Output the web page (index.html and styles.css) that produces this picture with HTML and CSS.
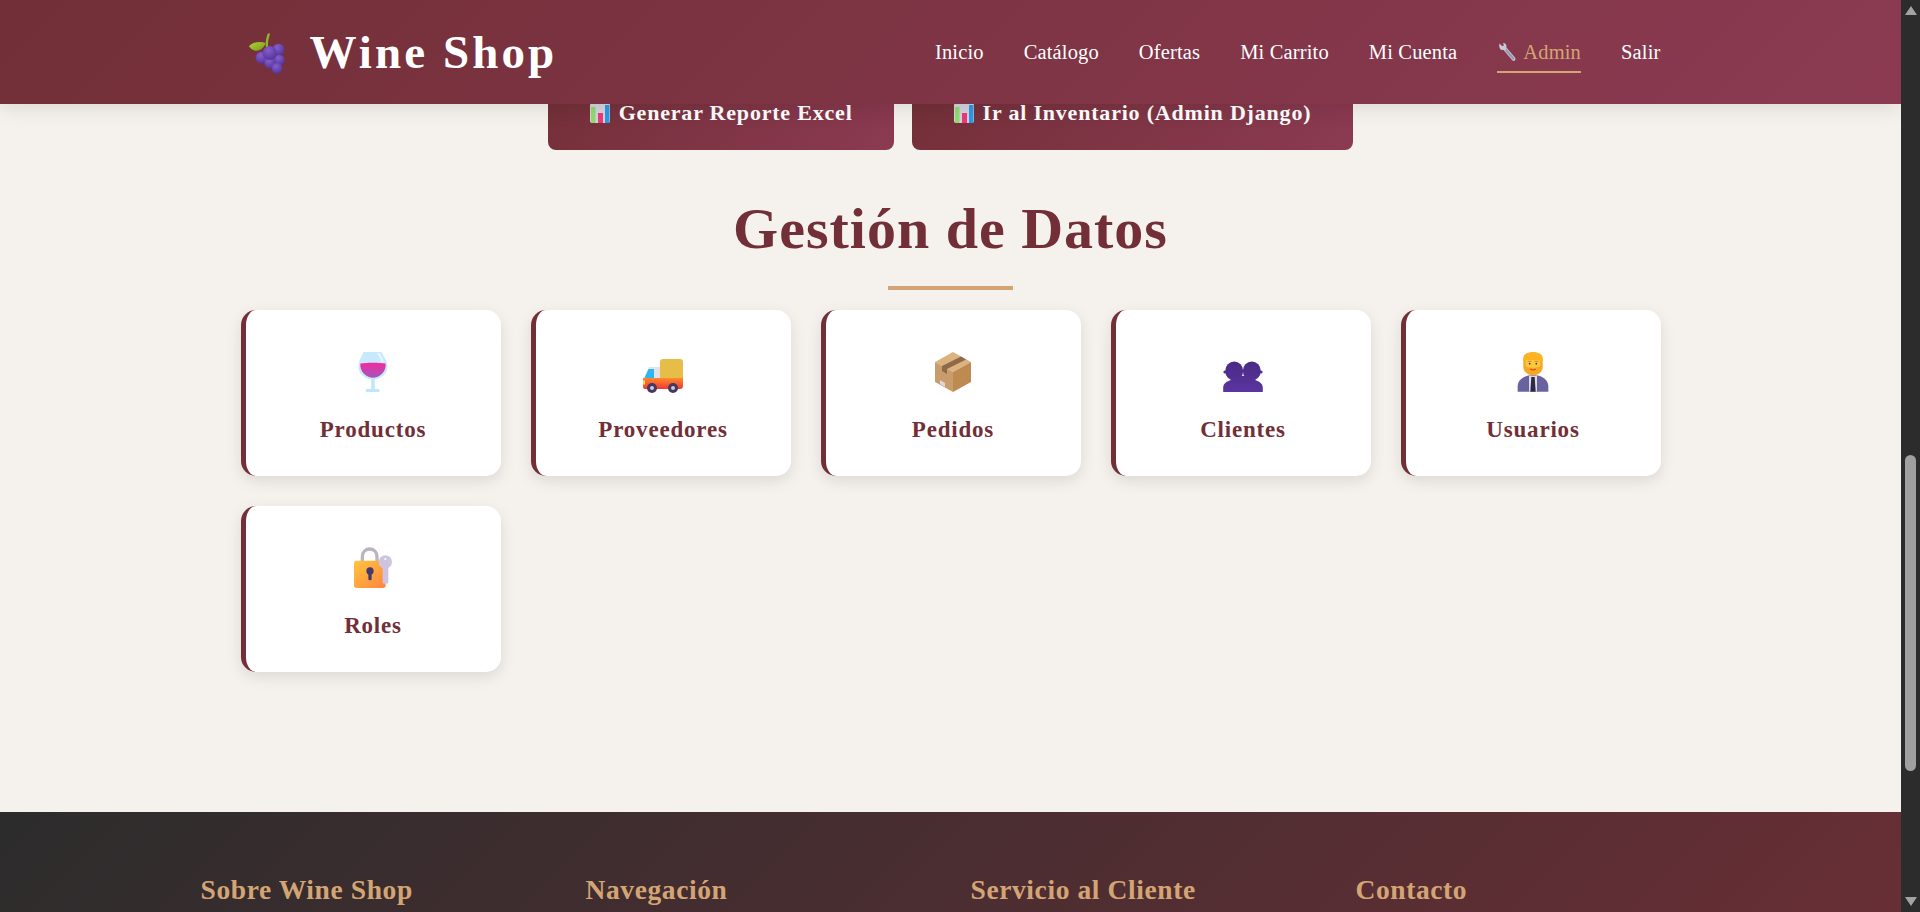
FILE: index.html
```html
<!DOCTYPE html>
<html>
<head>
    <title>Wine Shop</title>
    <link rel="stylesheet" href="styles.css">
</head>
<body>
    <div class="page">
        <header class="site-header">
            <div class="header-inner">
                <a class="logo">
                    <svg class="logo-icon" viewBox="0 0 150 150">
                        <defs>
                            <radialGradient id="grape" cx="40%" cy="30%" r="75%">
                                <stop offset="0" stop-color="#8660cc"/>
                                <stop offset="1" stop-color="#52309a"/>
                            </radialGradient>
                            <linearGradient id="leaf" x1="0" y1="0" x2="1" y2="1">
                                <stop offset="0" stop-color="#b6d43a"/>
                                <stop offset="1" stop-color="#6f9a1c"/>
                            </linearGradient>
                        </defs>
                        <path d="M66 60 C64 48 67 34 71 22" stroke="#8fb52a" stroke-width="7" fill="none" stroke-linecap="round"/>
                        <path d="M12 58 C24 44 46 42 62 48 C58 62 44 73 30 71 C22 69 16 64 12 58Z" fill="url(#leaf)"/>
                        <circle cx="100" cy="68" r="18" fill="url(#grape)"/>
                        <circle cx="50" cy="92" r="18" fill="url(#grape)"/>
                        <circle cx="103" cy="99" r="16" fill="url(#grape)"/>
                        <circle cx="75" cy="108" r="17" fill="url(#grape)"/>
                        <circle cx="96" cy="124" r="16" fill="url(#grape)"/>
                        <circle cx="74" cy="78" r="21" fill="url(#grape)"/>
                    </svg>
                    <span>Wine Shop</span>
                </a>
                <nav class="main-nav">
                    <a>Inicio</a>
                    <a>Catálogo</a>
                    <a>Ofertas</a>
                    <a>Mi Carrito</a>
                    <a>Mi Cuenta</a>
                    <a class="active">
                        <svg class="wrench" viewBox="0 0 20 20">
                            <path d="M2.5 1.5 L5 4 L7 3.6 L6 1 C8.5 1 10 3 9.4 5.6 L18 15.6 C19 17 18.4 18.4 17.4 18.8 C16.4 19.2 15.4 18.6 14.8 17.8 L6.6 8 C4 8.6 1.4 6.4 2.5 1.5Z" fill="#c9c7d6"/>
                            <path d="M9.4 6.6 L17.6 16.4 L16 18 L8 8.4Z" fill="#9a97ad"/>
                        </svg>
                        Admin
                    </a>
                    <a>Salir</a>
                </nav>
            </div>
        </header>

        <main class="content">
            <div class="actions">
                <a class="btn">
                    <svg class="chart" viewBox="0 0 20 20">
                        <rect width="20" height="20" rx="2" fill="#d6d2de"/>
                        <rect x="1" y="4" width="4.5" height="16" fill="#8fdc6e"/>
                        <rect x="8" y="10" width="5" height="10" fill="#ec3a78"/>
                        <rect x="15" y="2" width="4.5" height="18" fill="#2a9be6"/>
                    </svg>
                    Generar Reporte Excel
                </a>
                <a class="btn">
                    <svg class="chart" viewBox="0 0 20 20">
                        <rect width="20" height="20" rx="2" fill="#d6d2de"/>
                        <rect x="1" y="4" width="4.5" height="16" fill="#8fdc6e"/>
                        <rect x="8" y="10" width="5" height="10" fill="#ec3a78"/>
                        <rect x="15" y="2" width="4.5" height="18" fill="#2a9be6"/>
                    </svg>
                    Ir al Inventario (Admin Django)
                </a>
            </div>

            <h2 class="section-title">Gestión de Datos</h2>

            <div class="card-grid">
                <a class="card">
                    <svg class="card-icon" viewBox="0 0 44 44">
                        <defs>
                            <linearGradient id="wine" x1="0" y1="0" x2="0" y2="1">
                                <stop offset="0" stop-color="#f32aa0"/>
                                <stop offset="1" stop-color="#a355b8"/>
                            </linearGradient>
                        </defs>
                        <path d="M12.5 2 H30.5 C32 6 36.5 10 36.5 17 C36.5 25 28 29.5 22 29.5 C16 29.5 7.5 25 7.5 17 C7.5 10 11 6 12.5 2Z" fill="#c7e9fb"/>
                        <path d="M9.4 13.5 C16 12.5 28 12.5 34.6 13.5 C35.7 22 28 27.8 22 27.8 C16 27.8 8.3 22 9.4 13.5Z" fill="url(#wine)"/>
                        <path d="M26 3 C28 6 30 9 31 12 L32.5 12 C31.5 8.5 30 5.5 28.5 3Z" fill="#eef9ff"/>
                        <rect x="20.2" y="29" width="3.5" height="10" fill="#bfe6fa"/>
                        <rect x="14.7" y="39" width="14" height="3" rx="1.5" fill="#bfe6fa"/>
                    </svg>
                    <h3>Productos</h3>
                </a>
                <a class="card">
                    <svg class="card-icon" viewBox="0 0 44 44">
                        <defs>
                            <linearGradient id="truck-base" x1="0" y1="0" x2="0" y2="1">
                                <stop offset="0" stop-color="#ff8a2a"/>
                                <stop offset="1" stop-color="#ec3a3a"/>
                            </linearGradient>
                        </defs>
                        <rect x="19" y="9" width="23" height="26" rx="3" fill="#e5bd47"/>
                        <path d="M8 17 H19 V30 H2 Z" fill="#e4e0ec"/>
                        <path d="M7.5 19 H13 V28 H3.5 Z" fill="#2fb6ee"/>
                        <path d="M2 28 H42 V36 C42 38 41 39 39 39 H4 C2.5 39 2 38 2 36Z" fill="url(#truck-base)"/>
                        <rect x="2" y="30.5" width="2" height="4" fill="#ffd93b"/>
                        <circle cx="11" cy="38" r="5" fill="#46375c"/>
                        <circle cx="11" cy="38" r="2" fill="#cfc6e0"/>
                        <circle cx="32" cy="38" r="5" fill="#46375c"/>
                        <circle cx="32" cy="38" r="2" fill="#cfc6e0"/>
                    </svg>
                    <h3>Proveedores</h3>
                </a>
                <a class="card">
                    <svg class="card-icon" viewBox="0 0 44 44">
                        <path d="M22 2 L40 12 L22 22 L4 12Z" fill="#dcb27f"/>
                        <path d="M4 12 L22 22 V42 L4 32Z" fill="#c99c6b"/>
                        <path d="M40 12 L22 22 V42 L40 32Z" fill="#bd8a52"/>
                        <path d="M11 16 L30 6.5 L35 9.5 L16 19 V24 L11 21Z" fill="#8d6a4a"/>
                        <path d="M9 30 L14 33 V37 L9 34Z" fill="#ddd6e6"/>
                    </svg>
                    <h3>Pedidos</h3>
                </a>
                <a class="card">
                    <svg class="card-icon" viewBox="0 0 44 44">
                        <defs>
                            <linearGradient id="bust" gradientUnits="userSpaceOnUse" x1="0" y1="12" x2="0" y2="42">
                                <stop offset="0" stop-color="#4a2a86"/>
                                <stop offset="1" stop-color="#5a35a0"/>
                            </linearGradient>
                        </defs>
                        <g fill="url(#bust)">
                            <ellipse cx="13.2" cy="21" rx="9" ry="9.5"/>
                            <ellipse cx="30.8" cy="21" rx="9" ry="9.5"/>
                            <path d="M2.2 42 V38 C2.2 33 6 31.5 10 30 V26 H34 V30 C38 31.5 41.8 33 41.8 38 V42Z"/>
                            <circle cx="4" cy="22" r="1.6"/>
                            <circle cx="40" cy="22" r="1.6"/>
                        </g>
                    </svg>
                    <h3>Clientes</h3>
                </a>
                <a class="card">
                    <svg class="card-icon" viewBox="18 15 132 132">
                        <path d="M38 140 V124 C38 104 58 90 84 90 C110 90 130 104 130 124 V140Z" fill="#68629f"/>
                        <path d="M72 92 H96 V140 H72Z" fill="#dcdae6"/>
                        <path d="M79 96 H89 L92 140 H76Z" fill="#2e2946"/>
                        <path d="M55 38 C57 26 70 22 84 22 C98 22 111 26 113 38 V66 C113 80 100 91 84 91 C68 91 55 80 55 66Z" fill="#f7a823"/>
                        <path d="M62 44 H106 V60 C106 66 98 68 84 68 C70 68 62 66 62 60Z" fill="#fdc93c"/>
                        <path d="M55 48 C55 28 70 22 84 22 C98 22 113 28 113 48 C100 40 68 40 55 48Z" fill="#fcb51e"/>
                        <path d="M68 49 H79 M89 49 H100" stroke="#d9772a" stroke-width="2.5"/>
                        <circle cx="74" cy="56" r="2.5" fill="#4d3324"/>
                        <circle cx="94" cy="56" r="2.5" fill="#4d3324"/>
                        <path d="M76 72 Q84 78 92 72" stroke="#c9442e" stroke-width="3.5" fill="none"/>
                    </svg>
                    <h3>Usuarios</h3>
                </a>
                <a class="card">
                    <svg class="card-icon" viewBox="364 139 132 132">
                        <defs>
                            <linearGradient id="lock" x1="0" y1="0" x2="1" y2="1">
                                <stop offset="0" stop-color="#ffc63e"/>
                                <stop offset="1" stop-color="#ff8440"/>
                            </linearGradient>
                        </defs>
                        <path d="M398 190 V172 C398 140 442 140 442 172 V190" stroke="#b9b5c0" stroke-width="10" fill="none"/>
                        <rect x="373" y="183" width="95" height="82" rx="8" fill="url(#lock)"/>
                        <circle cx="421" cy="214" r="11" fill="#433b6b"/>
                        <rect x="416" y="216" width="10" height="26" rx="4" fill="#433b6b"/>
                        <circle cx="467" cy="187" r="20" fill="#cfc4e0"/>
                        <rect x="459" y="195" width="17" height="57" rx="4" fill="#cfc4e0"/>
                        <circle cx="467" cy="178" r="3" fill="#fff"/>
                    </svg>
                    <h3>Roles</h3>
                </a>
            </div>
        </main>

        <footer class="site-footer">
            <div class="footer-grid">
                <h3>Sobre Wine Shop</h3>
                <h3>Navegación</h3>
                <h3>Servicio al Cliente</h3>
                <h3>Contacto</h3>
            </div>
        </footer>
    </div>

    <div class="scrollbar">
        <span class="arrow-up"></span>
        <span class="thumb"></span>
        <span class="arrow-down"></span>
    </div>
</body>
</html>
```

FILE: styles.css
```css
* {
    box-sizing: border-box;
}
html, body {
    height: 912px;
}
body {
    margin: 0;
    display: flex;
    overflow: hidden;
    background: #f5f2ed;
    font-family: "Liberation Serif", serif;
    color: #2c2c2c;
}
.page {
    flex: 1;
    min-width: 0;
    overflow: hidden;
}

/* header */
.site-header {
    position: relative;
    z-index: 10;
    height: 104px;
    background: linear-gradient(135deg, #722f37, #8b3a52);
    box-shadow: 0 4px 20px rgba(0, 0, 0, 0.1);
}
.header-inner {
    width: 1420px;
    height: 100%;
    margin: 0 auto;
    display: flex;
    align-items: center;
    justify-content: space-between;
}
.logo {
    display: flex;
    align-items: center;
    gap: 15px;
    margin-left: 4px;
    color: #fff;
    font-size: 47px;
    font-weight: bold;
    letter-spacing: 3.1px;
}
.logo-icon {
    width: 50px;
    height: 50px;
}
.main-nav {
    display: flex;
    gap: 40px;
}
.main-nav a {
    display: flex;
    align-items: center;
    gap: 6px;
    padding: 9px 0 7px;
    color: #fff;
    font-size: 20.5px;
    letter-spacing: 0.15px;
    line-height: 24px;
    border-bottom: 2px solid transparent;
}
.main-nav a.active {
    color: #d4a574;
    border-bottom-color: #d4a574;
}
.wrench {
    width: 20px;
    height: 20px;
}

/* main */
.content {
    width: 1420px;
    margin: -28px auto 0;
    height: 736px;
}
.actions {
    display: flex;
    justify-content: center;
    gap: 18px;
}
.btn {
    display: flex;
    align-items: center;
    gap: 9px;
    padding: 25px 41.5px;
    border-radius: 8px;
    background: linear-gradient(135deg, #722f37, #8b3a52);
    color: #fff;
    font-size: 22px;
    font-weight: bold;
    letter-spacing: 0.8px;
    line-height: 24px;
}
.chart {
    width: 20px;
    height: 20px;
}
.section-title {
    position: relative;
    margin: 46px 0 0;
    height: 94px;
    color: #722f37;
    font-size: 58px;
    font-weight: bold;
    letter-spacing: 1px;
    line-height: 66px;
    text-align: center;
}
.section-title::after {
    content: "";
    position: absolute;
    left: 50%;
    bottom: 0;
    width: 125px;
    height: 4px;
    margin-left: -63px;
    background: #d4a574;
}
.card-grid {
    display: grid;
    grid-template-columns: repeat(5, 260px);
    gap: 30px;
    margin-top: 20px;
}
.card {
    display: flex;
    flex-direction: column;
    align-items: center;
    height: 166px;
    padding-top: 40px;
    background: #fff;
    border-left: 5px solid #722f37;
    border-radius: 15px;
    box-shadow: 0 5px 15px rgba(0, 0, 0, 0.1);
}
.card-icon {
    width: 44px;
    height: 44px;
}
.card h3 {
    margin: 24px 0 0;
    color: #722f37;
    font-size: 23px;
    font-weight: bold;
    letter-spacing: 0.8px;
    line-height: 24px;
}

/* footer */
.site-footer {
    height: 440px;
    padding-top: 62px;
    background: linear-gradient(135deg, #2c2c2c, #722f37);
}
.footer-grid {
    display: grid;
    grid-template-columns: repeat(4, 345px);
    gap: 40px;
    width: 1500px;
    margin: 0 auto;
}
.footer-grid h3 {
    margin: 0;
    color: #d4a574;
    font-size: 27.5px;
    font-weight: bold;
    letter-spacing: 0.6px;
    line-height: 32px;
}

/* drawn scrollbar */
.scrollbar {
    flex: 0 0 19px;
    display: flex;
    flex-direction: column;
    align-items: center;
    background: #2c2c2c;
}
.arrow-up, .arrow-down {
    width: 0;
    height: 0;
    border-left: 6px solid transparent;
    border-right: 6px solid transparent;
}
.arrow-up {
    margin-top: 6px;
    border-bottom: 9px solid #a3a3a3;
}
.arrow-down {
    margin-top: auto;
    margin-bottom: 6px;
    border-top: 9px solid #a3a3a3;
}
.thumb {
    width: 11px;
    height: 316px;
    margin-top: 440px;
    border-radius: 6px;
    background: #a0a0a0;
}
```
